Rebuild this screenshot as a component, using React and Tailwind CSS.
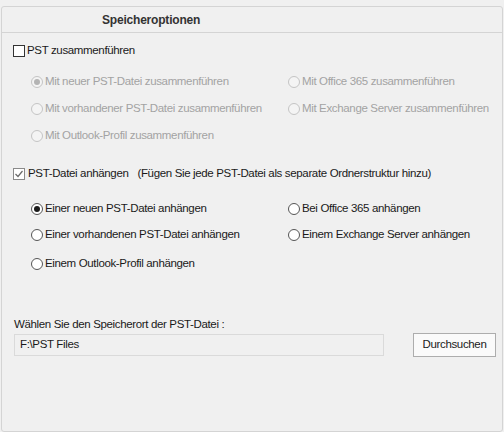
import React from "react";

const font = { fontFamily: '"Liberation Sans", Arial, sans-serif' };

function Radio({ checked, disabled }) {
  if (disabled) {
    return (
      <span className="flex h-[12px] w-[12px] shrink-0 items-center justify-center rounded-full border border-[#c4c4c4] bg-[#f4f4f4]">
        {checked && <span className="h-[6px] w-[6px] rounded-full bg-[#b4b4b4]" />}
      </span>
    );
  }
  return (
    <span className="flex h-[12px] w-[12px] shrink-0 items-center justify-center rounded-full border border-[#555] bg-white">
      {checked && <span className="h-[6px] w-[6px] rounded-full bg-[#1a1a1a]" />}
    </span>
  );
}

function RadioItem({ label, checked, disabled }) {
  return (
    <div className="flex h-[16px] items-center gap-[2px]">
      <Radio checked={checked} disabled={disabled} />
      <span className={disabled ? "text-[#a3a3a3]" : "text-[#1a1a1a]"}>{label}</span>
    </div>
  );
}

function Checkbox({ checked }) {
  return (
    <span
      className={
        "flex h-[12px] w-[12px] shrink-0 items-center justify-center border bg-white " +
        (checked ? "border-[#8a8a8a]" : "border-[#333]")
      }
    >
      {checked && (
        <svg width="10" height="10" viewBox="0 0 10 10">
          <path d="M1.5 5 L4 7.5 L8.5 2" fill="none" stroke="#6a6a6a" strokeWidth="1.2" />
        </svg>
      )}
    </span>
  );
}

export default function App() {
  return (
    <div className="h-[432px] w-[504px] bg-[#f0f0f0] px-[1px] pt-[6px] text-[11.5px] tracking-[-0.35px]" style={font}>
      <div className="flex h-[426px] flex-col rounded-[3px] border border-[#d4d4d4]">
        <div className="h-[26px] border-b border-[#d4d4d4] pl-[100px] text-[12px] font-bold leading-[26px] tracking-[-0.2px] text-[#333]">
          Speicheroptionen
        </div>

        <div className="mt-[10px] flex h-[16px] items-center gap-[2px] pl-[11px]">
          <Checkbox checked={false} />
          <span className="text-[#1a1a1a]">PST zusammenführen</span>
        </div>

        <div className="mt-[15px] grid grid-cols-[257px_1fr] gap-y-[11px] pl-[29px]">
          <RadioItem label="Mit neuer PST-Datei zusammenführen" checked disabled />
          <RadioItem label="Mit Office 365 zusammenführen" disabled />
          <RadioItem label="Mit vorhandener PST-Datei zusammenführen" disabled />
          <RadioItem label="Mit Exchange Server zusammenführen" disabled />
          <RadioItem label="Mit Outlook-Profil zusammenführen" disabled />
        </div>

        <div className="mt-[22px] flex h-[16px] items-center pl-[11px]">
          <Checkbox checked />
          <span className="ml-[3px] text-[#1a1a1a]">PST-Datei anhängen</span>
          <span className="ml-[9px] text-[#1a1a1a]">(Fügen Sie jede PST-Datei als separate Ordnerstruktur hinzu)</span>
        </div>

        <div className="mt-[19px] grid grid-cols-[257px_1fr] pl-[29px]">
          <RadioItem label="Einer neuen PST-Datei anhängen" checked />
          <RadioItem label="Bei Office 365 anhängen" />
          <div className="mt-[10px]">
            <RadioItem label="Einer vorhandenen PST-Datei anhängen" />
          </div>
          <div className="mt-[10px]">
            <RadioItem label="Einem Exchange Server anhängen" />
          </div>
          <div className="mt-[13px]">
            <RadioItem label="Einem Outlook-Profil anhängen" />
          </div>
        </div>

        <div className="mt-[44px] h-[16px] pl-[12px] leading-[16px] text-[#1a1a1a]">
          Wählen Sie den Speicherort der PST-Datei :
        </div>

        <div className="mt-[1px] flex items-center pl-[12px] pr-[6px]">
          <div className="flex h-[22px] w-[370px] items-center border border-[#dadada] bg-[#f0f0f0] pl-[5px] text-[#1a1a1a]">
            F:\PST Files
          </div>
          <button className="ml-auto h-[24px] w-[83px] border border-[#adadad] bg-[#fafafa] text-[11.5px] text-[#1a1a1a]">
            Durchsuchen
          </button>
        </div>
      </div>
    </div>
  );
}
